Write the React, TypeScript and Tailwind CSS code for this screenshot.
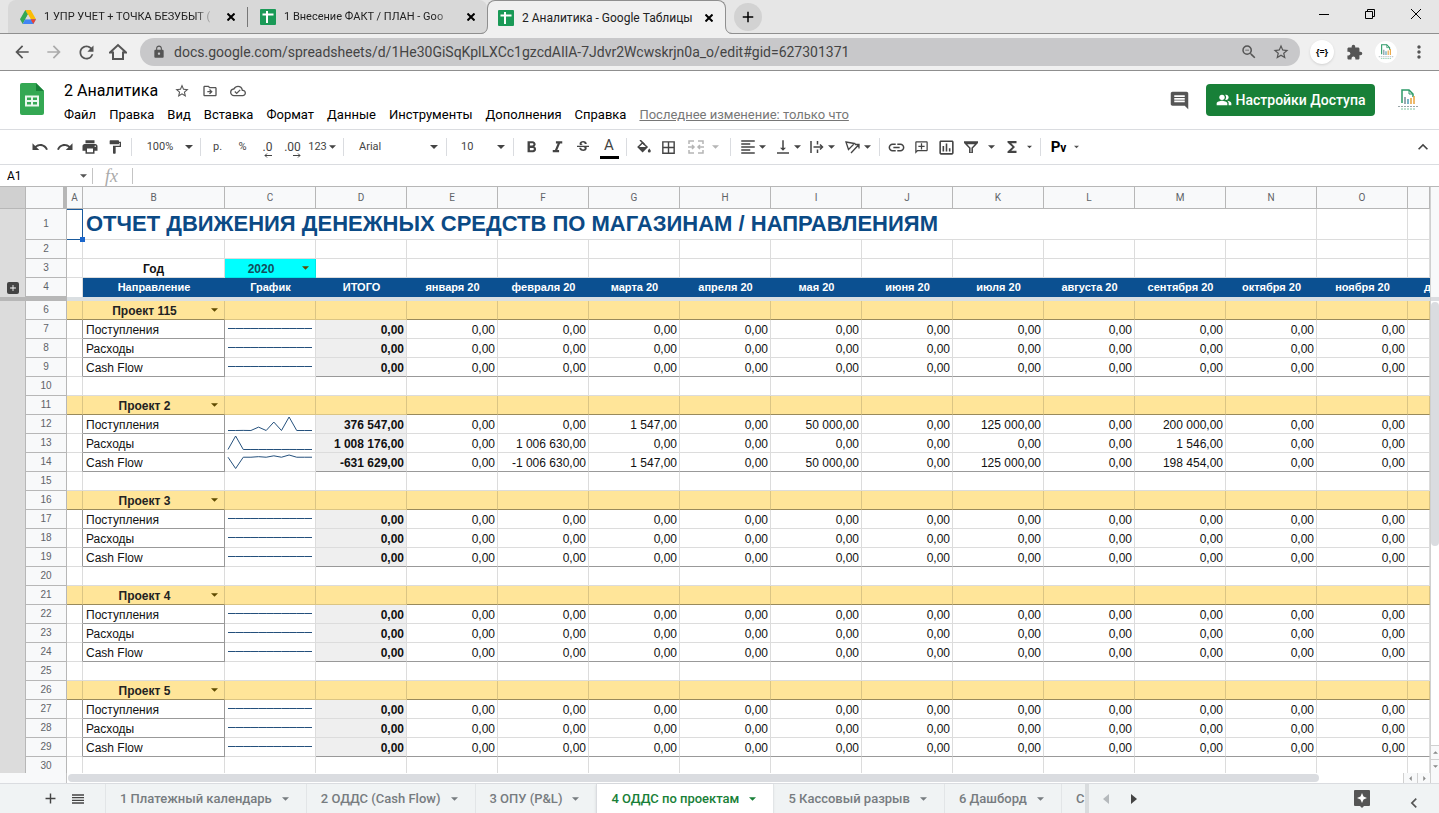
import { ReactNode } from 'react';
import clsx from 'clsx';
import {
  MdAdd,
  MdArrowBack,
  MdArrowForward,
  MdBorderAll,
  MdExtension,
  MdFormatAlignLeft,
  MdFormatBold,
  MdFormatItalic,
  MdFormatPaint,
  MdFunctions,
  MdInsertComment,
  MdInsertLink,
  MdKeyboardArrowLeft,
  MdKeyboardArrowUp,
  MdLock,
  MdMoreVert,
  MdOutlineAddComment,
  MdOutlineCloudDone,
  MdOutlineDriveFileMove,
  MdOutlineInsertChart,
  MdPeopleAlt,
  MdPrint,
  MdRedo,
  MdRefresh,
  MdReorder,
  MdStarBorder,
  MdStrikethroughS,
  MdUndo,
  MdVerticalAlignBottom,
  MdZoomOut,
} from 'react-icons/md';

const menuItems = ['Файл', 'Правка', 'Вид', 'Вставка', 'Формат', 'Данные', 'Инструменты', 'Дополнения', 'Справка'];

const columns = ['A', 'B', 'C', 'D', 'E', 'F', 'G', 'H', 'I', 'J', 'K', 'L', 'M', 'N', 'O', ''];

const months = [
  'января 20',
  'февраля 20',
  'марта 20',
  'апреля 20',
  'мая 20',
  'июня 20',
  'июля 20',
  'августа 20',
  'сентября 20',
  'октября 20',
  'ноября 20',
  'декабря 20',
];

const zeros = [0, 0, 0, 0, 0, 0, 0, 0, 0, 0, 0, 0];

type Line = { label: string; total: number; values: number[] };
type Project = { name: string; firstRow: number; lines: Line[] };

const emptyLines: Line[] = [
  { label: 'Поступления', total: 0, values: zeros },
  { label: 'Расходы', total: 0, values: zeros },
  { label: 'Cash Flow', total: 0, values: zeros },
];

const projects: Project[] = [
  { name: 'Проект 115', firstRow: 6, lines: emptyLines },
  {
    name: 'Проект 2',
    firstRow: 11,
    lines: [
      { label: 'Поступления', total: 376547, values: [0, 0, 1547, 0, 50000, 0, 125000, 0, 200000, 0, 0, 0] },
      { label: 'Расходы', total: 1008176, values: [0, 1006630, 0, 0, 0, 0, 0, 0, 1546, 0, 0, 0] },
      { label: 'Cash Flow', total: -631629, values: [0, -1006630, 1547, 0, 50000, 0, 125000, 0, 198454, 0, 0, 0] },
    ],
  },
  { name: 'Проект 3', firstRow: 16, lines: emptyLines },
  { name: 'Проект 4', firstRow: 21, lines: emptyLines },
  { name: 'Проект 5', firstRow: 26, lines: emptyLines },
];

const sheets = [
  { name: '1 Платежный календарь', active: false },
  { name: '2 ОДДС (Cash Flow)', active: false },
  { name: '3 ОПУ (P&L)', active: false },
  { name: '4 ОДДС по проектам', active: true },
  { name: '5 Кассовый разрыв', active: false },
  { name: '6 Дашборд', active: false },
];

const formatAmount = (value: number) => {
  const digits = String(Math.abs(value)).replace(/\B(?=(\d{3})+$)/g, ' ');
  return `${value < 0 ? '-' : ''}${digits},00`;
};

function Caret({ className }: { className?: string }) {
  return (
    <svg viewBox="0 0 8 4" className={clsx('h-1 w-2 shrink-0', className)} fill="currentColor">
      <path d="M0 0h8L4 4z" />
    </svg>
  );
}

function SheetsFavicon() {
  return (
    <svg viewBox="0 0 16 16" className="h-4 w-4 shrink-0">
      <rect width="16" height="16" rx="1" fill="#1a9a57" />
      <path d="M2.500 5.500h11M7 2v12" stroke="#fff" strokeWidth="2" />
    </svg>
  );
}

function DriveFavicon() {
  return (
    <svg viewBox="0 0 16 14" className="h-3.5 w-4 shrink-0">
      <path d="M5.300 0h5.400L8 4.600z" fill="#188038" />
      <path d="M5.300 0 0 9.300l2.700 4.700L8 4.600z" fill="#34a853" />
      <path d="M10.700 0 16 9.300h-5.400L5.300 0z" fill="#fbbc04" />
      <path d="M5.300 9.300H16L13.300 14H2.700z" fill="#4285f4" />
      <path d="M10.600 9.300H16L13.300 14z" fill="#ea4335" />
      <path d="M8 4.600 10.700 9.300H5.300z" fill="#dadada" />
    </svg>
  );
}

function CompanyLogo({ className }: { className?: string }) {
  return (
    <svg viewBox="0 0 22 22" className={className} fill="none">
      <path d="M5 14V1h7l4 4v3" stroke="#2c9a68" strokeWidth="1.500" />
      <path d="M12 1v4h4" stroke="#2c9a68" />
      <path d="M8 8v7" stroke="#7a8b94" strokeWidth="1.500" />
      <path d="M11 10v5" stroke="#4d9bb5" strokeWidth="1.500" />
      <path d="M14 9v6M17 7v8" stroke="#e9a23b" strokeWidth="1.500" />
      <path d="M1 17.500h20" stroke="#9aa5a8" strokeDasharray="2 1" />
      <path d="M4 20h14" stroke="#7fc2a0" strokeDasharray="2 1" />
    </svg>
  );
}

function BrowserTab({ title, icon, active }: { title: string; icon: ReactNode; active?: boolean }) {
  return (
    <div
      className={clsx(
        'relative flex h-[34px] items-center gap-2 pr-2',
        active
          ? 'z-10 w-[239px] rounded-t-lg border border-b-0 border-[#8f8f8f] bg-[#f0f0f0] pl-2.5'
          : 'w-[239px] bg-[#d8d8d8] pl-3'
      )}
    >
      {active && (
        <>
          <svg viewBox="0 0 7 8" className="absolute -left-[7px] bottom-0 h-2 w-[7px]">
            <path d="M0 8Q6.500 7 6.500 0H7v8z" fill="#f0f0f0" />
            <path d="M0 7.500Q6.500 7 6.500 0" fill="none" stroke="#8f8f8f" />
          </svg>
          <svg viewBox="0 0 7 8" className="absolute -right-[7px] bottom-0 h-2 w-[7px]">
            <path d="M7 8Q.5 7 .5 0H0v8z" fill="#f0f0f0" />
            <path d="M7 7.500Q.5 7 .5 0" fill="none" stroke="#8f8f8f" />
          </svg>
        </>
      )}
      {icon}
      <span
        className={clsx(
          'min-w-0 flex-1 overflow-hidden whitespace-nowrap text-[#222]',
          active ? 'text-xs' : 'text-[11px] [mask-image:linear-gradient(to_right,black_88%,transparent)]'
        )}
      >
        {title}
      </span>
      <button aria-label="Закрыть вкладку" className="flex h-4 w-4 items-center justify-center text-black">
        <svg viewBox="0 0 8 8" className="h-2 w-2" stroke="currentColor" strokeWidth="2">
          <path d="M.5.5l7 7M7.500.5l-7 7" />
        </svg>
      </button>
    </div>
  );
}

function BrowserChrome() {
  return (
    <div>
      <div className="flex h-[34px] items-start border-b border-[#8f8f8f] bg-[#e6e6e6] pl-2">
        <div className="flex h-[33px] overflow-hidden rounded-t-lg">
          <BrowserTab title="1 УПР УЧЕТ + ТОЧКА БЕЗУБЫТ (" icon={<DriveFavicon />} />
          <div className="flex items-center bg-[#d8d8d8]">
            <div className="h-5 w-px bg-[#777]" />
          </div>
          <BrowserTab title="1 Внесение ФАКТ / ПЛАН - Goo" icon={<SheetsFavicon />} />
        </div>
        <BrowserTab title="2 Аналитика - Google Таблицы" icon={<SheetsFavicon />} active />
        <button
          aria-label="Новая вкладка"
          className="mt-[3px] ml-2 flex h-7 w-7 items-center justify-center rounded-full bg-[#d2d2d2] text-black"
        >
          <MdAdd size={18} />
        </button>
        <div className="ml-auto flex h-7">
          <button aria-label="Свернуть" className="flex w-[46px] items-center justify-center">
            <svg viewBox="0 0 10 10" className="h-2.5 w-2.5" stroke="#000">
              <path d="M0 5.500h10" />
            </svg>
          </button>
          <button aria-label="Развернуть" className="flex w-[46px] items-center justify-center">
            <svg viewBox="0 0 10 10" className="h-2.5 w-2.5" stroke="#000" fill="none">
              <path d="M.5 2.500h7v7h-7zM2.500 2.500v-2h7v7h-2" />
            </svg>
          </button>
          <button aria-label="Закрыть" className="flex w-[46px] items-center justify-center">
            <svg viewBox="0 0 10 10" className="h-2.5 w-2.5" stroke="#000">
              <path d="M0 0l10 10M10 0 0 10" />
            </svg>
          </button>
        </div>
      </div>

      <div className="flex h-[37px] items-center border-b border-[#8f8f8f] bg-[#f0f0f0] pr-2.5 pl-1.5 text-[#555]">
        <button aria-label="Назад" className="flex w-8 justify-center">
          <MdArrowBack size={20} />
        </button>
        <button aria-label="Вперед" className="flex w-8 justify-center text-[#aaa]">
          <MdArrowForward size={20} />
        </button>
        <button aria-label="Обновить" className="flex w-8 justify-center">
          <MdRefresh size={21} />
        </button>
        <button aria-label="Домой" className="flex w-8 justify-center">
          <svg viewBox="0 0 18 18" className="h-[18px] w-[18px]" fill="none" stroke="currentColor" strokeWidth="2">
            <path d="M1 9.500 9 2l8 7.500h-3V16H4V9.500z" />
          </svg>
        </button>
        <div className="ml-1.5 flex h-7 flex-1 items-center rounded-full bg-[#c8c8ca] pr-2.5 pl-3">
          <MdLock size={14} className="-mt-px mr-2 shrink-0" />
          <input
            aria-label="Адресная строка"
            className="min-w-0 flex-1 bg-transparent text-sm text-[#444] outline-none"
            defaultValue="docs.google.com/spreadsheets/d/1He30GiSqKplLXCc1gzcdAIlA-7Jdvr2Wcwskrjn0a_o/edit#gid=627301371"
          />
          <button aria-label="Масштаб" className="mr-3.5">
            <MdZoomOut size={18} />
          </button>
          <button aria-label="Добавить в закладки">
            <MdStarBorder size={18} />
          </button>
        </div>
        <button
          aria-label="Расширение"
          className="ml-2.5 h-6 w-6 rounded-full bg-white font-['Open_Sans',sans-serif] text-[9px] font-bold text-black shadow"
        >
          {'{=}'}
        </button>
        <button aria-label="Расширения" className="ml-3">
          <MdExtension size={17} />
        </button>
        <button aria-label="Профиль" className="ml-3 flex h-[22px] w-[22px] items-center justify-center rounded-full bg-white">
          <CompanyLogo className="h-4 w-4" />
        </button>
        <button aria-label="Меню браузера" className="ml-3">
          <MdMoreVert size={20} />
        </button>
      </div>
    </div>
  );
}

function DocumentHeader() {
  return (
    <header className="flex h-[59px] border-b border-[#dadce0] bg-white">
      <svg viewBox="0 0 24 32" className="mt-3 ml-5 h-8 w-6" fill="none">
        <path d="M2 0h14l8 8v22a2 2 0 0 1-2 2H2a2 2 0 0 1-2-2V2a2 2 0 0 1 2-2z" fill="#34a853" />
        <path d="M16 0l8 8h-8z" fill="#188038" />
        <path d="M5 12.500h14v11H5zm2 2v2.500h4v-2.500zm6 0v2.500h4v-2.500zm-6 4.500v2.500h4V19zm6 0v2.500h4V19z" fill="#e9f7ed" fillRule="evenodd" />
      </svg>
      <div className="ml-5">
        <div className="mt-2 flex h-6 items-center">
          <h1 className="text-base text-black">2 Аналитика</h1>
          <div className="ml-4 flex gap-3 text-[#555]">
            <button aria-label="Пометить">
              <MdStarBorder size={16} />
            </button>
            <button aria-label="Переместить">
              <MdOutlineDriveFileMove size={16} />
            </button>
            <button aria-label="Статус документа">
              <MdOutlineCloudDone size={16} />
            </button>
          </div>
        </div>
        <nav className="flex h-6 items-center gap-[13px] text-[13px] text-black">
          {menuItems.map((item) => (
            <button key={item}>{item}</button>
          ))}
          <a href="#history" className="text-[#777] underline">
            Последнее изменение: только что
          </a>
        </nav>
      </div>
      <div className="ml-auto flex h-[58px] items-center pr-5">
        <button aria-label="Комментарии" className="text-[#555]">
          <MdInsertComment size={21} />
        </button>
        <button className="ml-4 flex h-8 w-[169px] items-center justify-center gap-1 rounded bg-[#188038] text-sm font-medium text-white">
          <MdPeopleAlt size={16} />
          Настройки Доступа
        </button>
        <button aria-label="Аккаунт" className="ml-[22px]">
          <CompanyLogo className="h-[22px] w-[22px]" />
        </button>
      </div>
    </header>
  );
}

function ToolButton({ label, children, className }: { label: string; children: ReactNode; className?: string }) {
  return (
    <button aria-label={label} className={clsx('flex h-7 items-center justify-center', className ?? 'w-[25px]')}>
      {children}
    </button>
  );
}

function Separator() {
  return <div className="mx-1 h-[18px] w-px shrink-0 bg-[#dadce0]" />;
}

function DecimalIcon({ text, right }: { text: string; right?: boolean }) {
  return (
    <span className="flex flex-col pt-1 text-xs leading-3">
      {text}
      <svg viewBox="0 0 8 5" className={clsx('h-[5px] w-2 self-end', right && '-scale-x-100')} fill="none" stroke="currentColor">
        <path d="M8 2.500H1M3 .5l-2 2 2 2" />
      </svg>
    </span>
  );
}

function Toolbar() {
  return (
    <div className="flex h-[35px] items-center border-b border-[#dadce0] bg-white pl-[27px] text-[11px] text-[#444]">
      <ToolButton label="Отменить">
        <MdUndo size={18} />
      </ToolButton>
      <ToolButton label="Повторить">
        <MdRedo size={18} />
      </ToolButton>
      <ToolButton label="Печать">
        <MdPrint size={18} />
      </ToolButton>
      <ToolButton label="Копировать форматирование">
        <MdFormatPaint size={16} />
      </ToolButton>
      <Separator />
      <ToolButton label="Масштаб" className="w-[60px] gap-3 pl-2">
        100%
        <Caret />
      </ToolButton>
      <Separator />
      <ToolButton label="Денежный формат">р.</ToolButton>
      <ToolButton label="Процентный формат">%</ToolButton>
      <ToolButton label="Уменьшить число знаков">
        <DecimalIcon text=".0" />
      </ToolButton>
      <ToolButton label="Увеличить число знаков">
        <DecimalIcon text=".00" right />
      </ToolButton>
      <ToolButton label="Другие форматы" className="w-[34px] gap-0.5">
        123
        <Caret className="w-[7px]" />
      </ToolButton>
      <Separator />
      <ToolButton label="Шрифт" className="w-[94px] pr-1 pl-[11px]">
        <span className="flex-1 text-left">Arial</span>
        <Caret />
      </ToolButton>
      <Separator />
      <ToolButton label="Размер шрифта" className="w-[58px] pr-1 pl-2.5">
        <span className="flex-1 text-left">10</span>
        <Caret />
      </ToolButton>
      <Separator />
      <ToolButton label="Полужирный" className="w-[26px]">
        <MdFormatBold size={19} />
      </ToolButton>
      <ToolButton label="Курсив" className="w-[26px]">
        <MdFormatItalic size={19} />
      </ToolButton>
      <ToolButton label="Зачеркнутый" className="w-[26px]">
        <MdStrikethroughS size={16} />
      </ToolButton>
      <ToolButton label="Цвет текста" className="w-[26px]">
        <span className="h-6 w-[19px] border-b-3 border-black text-[15px] leading-5">A</span>
      </ToolButton>
      <Separator />
      <ToolButton label="Цвет заливки">
        <svg viewBox="0 0 14 14" className="h-3.5 w-3.5" fill="none">
          <path d="M3 0l4.500 4.500" stroke="currentColor" strokeWidth="1.500" />
          <path d="M.8 7h9.600L5.600 11.800z" fill="currentColor" />
          <path d="M5.600 2.700 10 7l-4.400 4.400L1.200 7z" stroke="currentColor" strokeWidth="1.500" />
          <path d="M12.300 8.500s1.500 1.600 1.500 2.600a1.500 1.500 0 0 1-3 0c0-1 1.500-2.600 1.500-2.600z" fill="currentColor" />
        </svg>
      </ToolButton>
      <ToolButton label="Границы">
        <MdBorderAll size={17} />
      </ToolButton>
      <ToolButton label="Объединить ячейки" className="w-[45px] gap-2 text-[#b5b5b5]">
        <svg viewBox="0 0 16 14" className="h-3.5 w-4" fill="none" stroke="currentColor" strokeWidth="1.500">
          <path d="M1 4V1h5M10 1h5v3M1 10v3h5M10 13h5v-3M0 7h6M16 7h-6M4 5l2 2-2 2M12 5l-2 2 2 2" />
        </svg>
        <Caret className="w-[7px]" />
      </ToolButton>
      <Separator />
      <ToolButton label="Выравнивание по горизонтали" className="w-[35px] gap-0.5">
        <MdFormatAlignLeft size={18} />
        <Caret className="w-[7px]" />
      </ToolButton>
      <ToolButton label="Выравнивание по вертикали" className="w-[35px] gap-0.5">
        <MdVerticalAlignBottom size={18} />
        <Caret className="w-[7px]" />
      </ToolButton>
      <ToolButton label="Перенос текста" className="w-[35px] gap-1">
        <svg viewBox="0 0 14 14" className="h-3.5 w-3.5" fill="none" stroke="currentColor" strokeWidth="1.500">
          <path d="M1 1v12M7.500 1v3.500M7.500 9.500V13M3.500 7H12" />
          <path d="M10 4.500 12.500 7 10 9.500" />
        </svg>
        <Caret className="w-[7px]" />
      </ToolButton>
      <ToolButton label="Поворот текста" className="w-[35px] gap-1">
        <svg viewBox="0 0 15 14" className="h-3.5 w-[15px]" fill="none" stroke="currentColor" strokeWidth="1.300">
          <path d="M1 2l8.500 1.500L3.500 9.500zM6 13l7.500-8M10 4.500h4v4" />
        </svg>
        <Caret className="w-[7px]" />
      </ToolButton>
      <Separator />
      <ToolButton label="Вставить ссылку">
        <MdInsertLink size={19} />
      </ToolButton>
      <ToolButton label="Добавить комментарий">
        <MdOutlineAddComment size={15} className="-scale-x-100" />
      </ToolButton>
      <ToolButton label="Вставить диаграмму">
        <MdOutlineInsertChart size={19} />
      </ToolButton>
      <ToolButton label="Фильтр" className="w-10 gap-2.5">
        <svg viewBox="0 0 14 12" className="h-3 w-3.5" fill="none" stroke="currentColor" strokeWidth="1.500">
          <path d="M0 1h14M1.500 2.500 5.800 7v5h2.400V7l4.300-4.500z" />
        </svg>
        <Caret className="w-[7px]" />
      </ToolButton>
      <ToolButton label="Функции" className="w-[37px] gap-1.5">
        <MdFunctions size={18} />
        <Caret className="w-[5px]" />
      </ToolButton>
      <Separator />
      <ToolButton label="Способ ввода" className="w-10 gap-2 text-black">
        <span className="text-[15px] font-bold">
          P<span className="text-xs">v</span>
        </span>
        <Caret className="w-[5px] text-[#555]" />
      </ToolButton>
      <button aria-label="Скрыть меню" className="mr-1.5 ml-auto">
        <MdKeyboardArrowUp size={20} />
      </button>
    </div>
  );
}

function FormulaBar() {
  return (
    <div className="flex h-[22px] items-center border-b border-[#b7b7b7] bg-white text-xs text-black">
      <input aria-label="Поле имени" className="w-20 pl-[7px] outline-none" defaultValue="A1" />
      <Caret className="w-[7px] text-[#555]" />
      <div className="ml-[5px] h-4 w-px bg-[#c4c4c4]" />
      <span className="w-[39px] pl-3 font-['Liberation_Serif',serif] text-lg leading-5 text-[#aaa] italic">fx</span>
      <div className="h-4 w-px bg-[#c4c4c4]" />
      <input aria-label="Строка формул" className="ml-2 min-w-0 flex-1 outline-none" />
    </div>
  );
}

function Sparkline({ values }: { values: number[] }) {
  const min = Math.min(...values);
  const range = Math.max(...values) - min;
  const points = values
    .map((value, i) => {
      const x = 3 + (i * 84) / (values.length - 1);
      const y = range === 0 ? 8.5 : 15.5 - ((value - min) / range) * 13.5;
      return `${x},${y}`;
    })
    .join(' ');
  return (
    <svg viewBox="0 0 90 18" className="block h-[18px] w-[90px]" fill="none">
      <polyline points={points} stroke="#24507c" />
    </svg>
  );
}

function RowHead({ n, children }: { n: number; children?: ReactNode }) {
  return (
    <>
      <td className="border-r border-[#b7b7b7] bg-[#dcdcdc]">{children}</td>
      <th className="border-r border-b border-[#b7b7b7] bg-[#f8f9fa] text-[10px] font-normal text-[#5f6368]">{n}</th>
    </>
  );
}

function BlankCells({ count }: { count: number }) {
  return Array.from({ length: count }, (_, i) => <td key={i} className="border-r border-b border-[#dcdcdc]" />);
}

function CellSelect({ label, value, className }: { label: string; value: string; className?: string }) {
  return (
    <div className="relative">
      <select
        aria-label={label}
        defaultValue={value}
        className={clsx('block h-[18px] w-full appearance-none pr-[18px] text-center font-bold outline-none', className)}
      >
        <option>{value}</option>
      </select>
      <Caret className="pointer-events-none absolute top-[7px] right-1.5 w-[7px] text-[#5f4b00]" />
    </div>
  );
}

function ProjectRows({ project }: { project: Project }) {
  return (
    <>
      <tr className="h-[19px] bg-[#ffe599]">
        <RowHead n={project.firstRow} />
        <td className="border-r border-b border-[#dbc584] border-b-[#998a5c]" />
        <td className="border-r border-b border-[#dbc584] border-b-[#998a5c]">
          <CellSelect label="Направление" value={project.name} className="pt-px text-[#222]" />
        </td>
        <td className="border-r border-b border-[#dbc584]" />
        <td className="border-r border-b border-[#dbc584]" />
        {months.map((month) => (
          <td key={month} className="border-r border-b border-[#dbc584] border-b-[#998a5c]" />
        ))}
      </tr>
      {project.lines.map((line, i) => {
        const last = i === project.lines.length - 1;
        return (
          <tr key={line.label} className="h-[19px] leading-4">
            <RowHead n={project.firstRow + i + 1} />
            <td className="border-r border-b border-[#dcdcdc] border-r-[#999]" />
            <td className="border-r border-b border-[#999] pt-0.5 pl-[3px]">{line.label}</td>
            <td className="border-r border-b border-[#dcdcdc]">
              <Sparkline values={line.values} />
            </td>
            <td
              className={clsx(
                'border-r border-b border-[#dcdcdc] bg-[#efefef] pt-0.5 pr-0.5 text-right font-bold',
                last && 'border-b-[#999]'
              )}
            >
              {formatAmount(line.total)}
            </td>
            {line.values.map((value, m) => (
              <td
                key={months[m]}
                className={clsx('border-r border-b border-[#dcdcdc] pt-0.5 pr-0.5 text-right', last && 'border-b-[#999]')}
              >
                {m < 11 && formatAmount(value)}
              </td>
            ))}
          </tr>
        );
      })}
      <tr className="h-[19px]">
        <RowHead n={project.firstRow + 4} />
        <BlankCells count={16} />
      </tr>
    </>
  );
}

function Grid() {
  return (
    <div className="flex min-h-0 flex-1 bg-white">
      <div className="min-w-0 flex-1 overflow-hidden">
        <table className="w-full min-w-[1430px] table-fixed border-separate border-spacing-0 font-['Liberation_Sans',Arial,sans-serif] text-xs leading-[18px] whitespace-nowrap text-[#111]">
          <colgroup>
            <col className="w-[26px]" />
            <col className="w-[41px]" />
            <col className="w-4" />
            <col className="w-[142px]" />
            {Array.from({ length: 13 }, (_, i) => (
              <col key={i} className="w-[91px]" />
            ))}
            <col />
          </colgroup>
          <thead>
            <tr className="h-[22px] font-['Roboto',sans-serif] text-[10px] text-[#5f6368]">
              <td className="border-r border-b border-[#b7b7b7] bg-[#d0d0d0]" />
              <td className="border-r-4 border-b border-[#b7b7b7] bg-[#f8f9fa]" />
              {columns.map((name, i) => (
                <th key={i} className="border-r border-b border-[#b7b7b7] bg-[#f8f9fa] font-normal">
                  {name}
                </th>
              ))}
            </tr>
          </thead>
          <tbody>
            <tr className="h-[31px]">
              <RowHead n={1} />
              <td className="relative border border-l-0 border-[#1a5a9c]">
                <div className="absolute -right-[3px] -bottom-[3px] z-10 h-[5px] w-[5px] bg-[#1a66cc]" />
              </td>
              <td colSpan={13} className="border-r border-b border-[#dcdcdc] pl-[3px] text-[22px] leading-[30px] font-bold text-[#0b4a85]">
                ОТЧЕТ ДВИЖЕНИЯ ДЕНЕЖНЫХ СРЕДСТВ ПО МАГАЗИНАМ / НАПРАВЛЕНИЯМ
              </td>
              <BlankCells count={2} />
            </tr>
            <tr className="h-[19px]">
              <RowHead n={2} />
              <BlankCells count={16} />
            </tr>
            <tr className="h-[19px] leading-4">
              <RowHead n={3} />
              <td className="border-r border-b border-[#dcdcdc]" />
              <td className="border-r border-b border-[#dcdcdc] pt-0.5 text-center font-bold">Год</td>
              <td className="border-r border-b border-[#00e5e5] bg-[#00ffff]">
                <CellSelect label="Год" value="2020" className="pt-px text-[#134f5c]" />
              </td>
              <BlankCells count={13} />
            </tr>
            <tr className="h-[19px] bg-[#0b5091] text-[11px] leading-4 text-white">
              <RowHead n={4}>
                <button aria-label="Развернуть группу" className="mx-auto flex h-3 w-3 items-center justify-center rounded-xs bg-[#444] text-white">
                  <MdAdd size={10} />
                </button>
              </RowHead>
              <td className="border-r border-[#dcdcdc] bg-white" />
              <th className="pb-0.5">Направление</th>
              <th className="pb-0.5">График</th>
              <th className="pb-0.5">ИТОГО</th>
              {months.map((month, i) => (
                <th key={month} className={clsx('pb-0.5', i === 11 && 'overflow-hidden pl-4 text-left')}>
                  {month}
                </th>
              ))}
            </tr>
            {/* frozen rows divider */}
            <tr className="h-1">
              <td colSpan={2} className="bg-[#b7b7b7]" />
              <td colSpan={16} className="bg-[#dadfe2]" />
            </tr>
            {projects.map((project) => (
              <ProjectRows key={project.name} project={project} />
            ))}
          </tbody>
        </table>
      </div>
      <div className="flex w-[9px] shrink-0 flex-col border-l border-[#d0d0d0] bg-white">
        <div className="h-[114px] shrink-0 border-b-4 border-[#dadce0] bg-[#f8f9fa]" />
        <div className="mt-px h-[244px] rounded-full bg-[#dadce0]" />
        <button aria-label="Вверх" className="mt-auto flex h-3.5 items-center justify-center border-t border-[#d0d0d0] bg-[#f8f9fa]">
          <Caret className="h-[3px] w-[5px] rotate-180 text-[#888]" />
        </button>
        <button aria-label="Вниз" className="flex h-3.5 items-center justify-center border-t border-[#d0d0d0] bg-[#f8f9fa]">
          <Caret className="h-[3px] w-[5px] text-[#888]" />
        </button>
      </div>
    </div>
  );
}

function HorizontalScrollbar() {
  return (
    <div className="flex h-2.5 items-center bg-white">
      <div className="h-full w-[67px] border-r border-[#c4c4c4] bg-[#f8f9fa]" />
      <div className="flex-1 pr-[84px] pl-px">
        <div className="h-2 rounded-full bg-[#dadce0]" />
      </div>
      <button aria-label="Влево" className="flex h-full w-3.5 items-center justify-center border-l border-[#d0d0d0] bg-[#f8f9fa]">
        <Caret className="h-[3px] w-[5px] rotate-90 text-[#888]" />
      </button>
      <button aria-label="Вправо" className="flex h-full w-3.5 items-center justify-center border-x border-[#d0d0d0] bg-[#f8f9fa]">
        <Caret className="h-[3px] w-[5px] -rotate-90 text-[#888]" />
      </button>
      <div className="h-full w-2 bg-[#f8f9fa]" />
    </div>
  );
}

function SheetTabs() {
  return (
    <footer className="flex h-[30px] shrink-0 items-stretch border-t border-[#dadce0] bg-[#f0f3f4] text-[13px] font-medium text-[#777c80]">
      <button aria-label="Добавить лист" className="ml-9 flex w-7 items-center justify-center text-[#444]">
        <MdAdd size={17} />
      </button>
      <button aria-label="Все листы" className="flex w-7 items-center justify-center text-[#444]">
        <MdReorder size={16} />
      </button>
      <div className="ml-[13px] flex min-w-0">
        {sheets.map((sheet) => (
          <button
            key={sheet.name}
            className={clsx(
              'flex shrink-0 items-center gap-2.5 border-l pr-[17px] pl-[14px]',
              sheet.active ? 'border-[#dadce0] bg-white text-[#188038] shadow' : 'border-[#e2e5e7]'
            )}
          >
            {sheet.name}
            <Caret className="w-[7px]" />
          </button>
        ))}
        <button className="w-6 shrink-0 overflow-hidden border-l border-[#e2e5e7] pl-[14px] text-left">С</button>
      </div>
      <div className="w-1 bg-[#d9dcde]" />
      <div className="flex items-center gap-[22px] pl-3.5">
        <button aria-label="Предыдущие листы" className="text-[#b5b9bc]">
          <svg viewBox="0 0 6 10" className="h-2.5 w-1.5" fill="currentColor">
            <path d="M6 0v10L0 5z" />
          </svg>
        </button>
        <button aria-label="Следующие листы" className="text-[#444]">
          <svg viewBox="0 0 6 10" className="h-2.5 w-1.5" fill="currentColor">
            <path d="M0 0v10l6-5z" />
          </svg>
        </button>
      </div>
      <div className="ml-auto flex items-center gap-[34px] pr-[15px] text-[#555]">
        <button aria-label="Анализ данных">
          <svg viewBox="0 0 16 18" className="h-[18px] w-4">
            <path d="M1 0h14a1 1 0 0 1 1 1v14a1 1 0 0 1-1 1h-5l-2 2-2-2H1a1 1 0 0 1-1-1V1a1 1 0 0 1 1-1z" fill="currentColor" />
            <path d="M8 3l1.500 3.500L13 8 9.500 9.500 8 13 6.500 9.500 3 8l3.500-1.500z" fill="#fff" />
          </svg>
        </button>
        <button aria-label="Показать боковую панель" className="mt-2">
          <MdKeyboardArrowLeft size={20} />
        </button>
      </div>
    </footer>
  );
}

export default function App() {
  return (
    <div className="flex h-screen flex-col overflow-hidden bg-white font-['Roboto',sans-serif]">
      <BrowserChrome />
      <DocumentHeader />
      <Toolbar />
      <FormulaBar />
      <Grid />
      <HorizontalScrollbar />
      <SheetTabs />
    </div>
  );
}
